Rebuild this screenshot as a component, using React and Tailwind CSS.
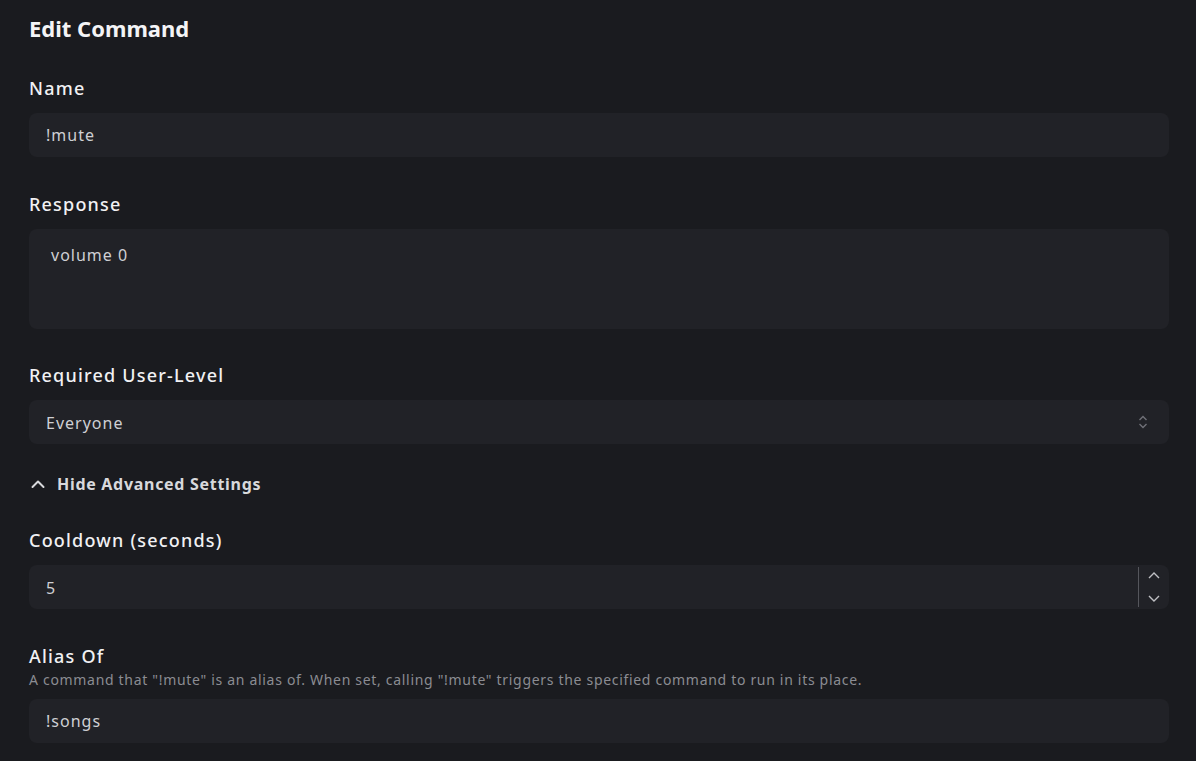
import React from "react";

const font = { fontFamily: '"Noto Sans", "Open Sans", sans-serif' };

const Label = ({ children }) => (
  <label className="block text-[18px] leading-7 font-medium tracking-[1.2px] text-[#f1f1f3]">{children}</label>
);

const TextBox = ({ value }) => (
  <div className="flex h-11 items-center rounded-lg bg-[#212227] px-[17px] text-[16px] tracking-[1px] text-[#cfd0d4]">
    {value}
  </div>
);

export default function App() {
  return (
    <div className="min-h-screen bg-[#1a1b1f] pl-[29px] pr-[27px] pt-[14px] pb-6" style={font}>
      <h2 className="text-[22px] leading-7 font-bold text-[#f4f4f6]">Edit Command</h2>

      <div className="mt-[32px] flex flex-col">
        {/* Name */}
        <Label>Name</Label>
        <div className="mt-[11px]">
          <TextBox value="!mute" />
        </div>

        {/* Response */}
        <div className="mt-[33px]">
          <Label>Response</Label>
        </div>
        <div className="mt-[11px] h-[100px] rounded-lg bg-[#212227] px-[22px] pt-[14px] text-[16px] tracking-[1px] text-[#cfd0d4]">
          volume 0
        </div>

        {/* User level */}
        <div className="mt-[32px]">
          <Label>Required User-Level</Label>
        </div>
        <div className="mt-[11px] flex h-11 items-center justify-between rounded-lg bg-[#212227] pl-[17px] pr-[20px] text-[16px] tracking-[1px] text-[#cfd0d4]">
          <span className="pt-[1px]">Everyone</span>
          <svg width="12" height="16" viewBox="0 0 12 16" fill="none" stroke="#6f7077" strokeWidth="1.4">
            <path d="M2.5 6 L6 2.5 L9.5 6" />
            <path d="M2.5 10 L6 13.5 L9.5 10" />
          </svg>
        </div>

        {/* Advanced toggle */}
        <button className="mt-[28px] flex items-center gap-[12px] self-start pl-[2px] text-[16px] font-bold tracking-[0.7px] text-[#d8d9dc]">
          <svg width="14" height="10" viewBox="0 0 14 10" fill="none" stroke="#d8d9dc" strokeWidth="2" strokeLinecap="round" strokeLinejoin="round">
            <path d="M1.5 8 L7 2.5 L12.5 8" />
          </svg>
          Hide Advanced Settings
        </button>

        {/* Cooldown */}
        <div className="mt-[30px]">
          <Label>Cooldown (seconds)</Label>
        </div>
        <div className="mt-[11px] flex h-11 items-stretch rounded-lg bg-[#212227] text-[16px] text-[#cfd0d4]">
          <div className="flex flex-1 items-center pl-[17px] pt-[2px]">5</div>
          <div className="my-[2px] flex w-[31px] flex-col items-center justify-between border-l border-[#55565c] py-[4px]">
            <svg width="14" height="9" viewBox="0 0 14 9" fill="none" stroke="#bfc0c4" strokeWidth="1.4">
              <path d="M2 7 L7 2 L12 7" />
            </svg>
            <svg width="14" height="9" viewBox="0 0 14 9" fill="none" stroke="#bfc0c4" strokeWidth="1.4">
              <path d="M2 2 L7 7 L12 2" />
            </svg>
          </div>
        </div>

        {/* Alias */}
        <div className="mt-[33px]">
          <Label>Alias Of</Label>
        </div>
        <p className="text-[14px] leading-5 tracking-[0.69px] text-[#8b8c92]">
          A command that "!mute" is an alias of. When set, calling "!mute" triggers the specified command to run in its place.
        </p>
        <div className="mt-[9px]">
          <TextBox value="!songs" />
        </div>
      </div>
    </div>
  );
}
